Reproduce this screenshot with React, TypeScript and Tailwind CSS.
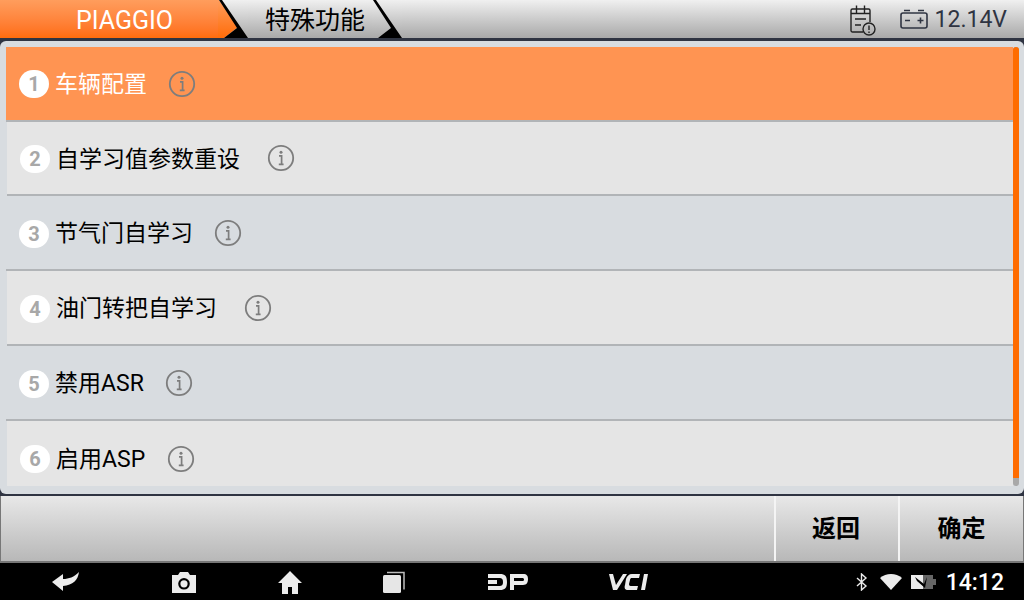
const FONT = { fontFamily: '"Roboto", "Noto Sans CJK SC", sans-serif' };

function Chevron({ fill, next }: { fill: string; next: string }) {
  return (
    <svg width="30" height="38" viewBox="0 0 30 38" className="shrink-0 block">
      <defs>
        <linearGradient id={fill} x1="0" y1="0" x2="0" y2="1">
          <stop offset="0" stopColor={fill === "o" ? "#ff9d5c" : "#f0f0f0"} />
          <stop offset="1" stopColor={fill === "o" ? "#ff6c0a" : "#a9a9a9"} />
        </linearGradient>
        <linearGradient id={next} x1="0" y1="0" x2="0" y2="1">
          <stop offset="0" stopColor="#f0f0f0" />
          <stop offset="1" stopColor="#a9a9a9" />
        </linearGradient>
      </defs>
      <rect width="30" height="38" fill={`url(#${next})`} />
      <polygon points="0,0 1,0 20,27 6,38 0,38" fill={`url(#${fill})`} />
      <polygon points="1,0 4,0 30,38 6,38 19,28" fill="#000" />
    </svg>
  );
}

function Info() {
  return (
    <svg width="28" height="28" viewBox="0 0 28 28" className="shrink-0 block">
      <circle cx="14" cy="14" r="12.2" fill="none" stroke="#7d7d7d" strokeWidth="1.8" />
      <circle cx="14" cy="8.300" r="1.500" fill="#7d7d7d" />
      <path d="M12 11.800h2.600v8.600M11.800 20.400h4.800" fill="none" stroke="#7d7d7d" strokeWidth="1.700" />
    </svg>
  );
}

const rows = [
  { n: 1, t: "车辆配置", gap: "ml-[21px]", badge: "", bg: "bg-[#ff9452] text-white h-[75px] pl-[13px]" },
  { n: 2, t: "自学习值参数重设", gap: "ml-[27px]", badge: "mt-[2px]", bg: "bg-[#e5e5e5] text-black h-[74px] ml-px pl-[13px]" },
  { n: 3, t: "节气门自学习", gap: "ml-[21px]", badge: "mt-[2px]", bg: "bg-[#d8dce0] text-black h-[75px] pl-[13px]" },
  { n: 4, t: "油门转把自学习", gap: "ml-[27px]", badge: "mt-[2px]", bg: "bg-[#e5e5e5] text-black h-[75px] ml-px pl-[13px]" },
  { n: 5, t: "禁用ASR", gap: "ml-[21px]", badge: "mt-[2px]", bg: "bg-[#d8dce0] text-black h-[75px] pl-[13px]" },
  { n: 6, t: "启用ASP", gap: "ml-[22px]", badge: "", bg: "bg-[#e5e5e5] text-black h-[75px] ml-px pl-[13px]" },
];

export default function App() {
  return (
    <div className="w-[1024px] h-[600px] overflow-hidden flex flex-col bg-[#2f3442]" style={FONT}>
      <header className="h-[38px] shrink-0 flex items-stretch bg-gradient-to-b from-[#f0f0f0] to-[#a9a9a9]">
        <div className="w-[218px] bg-gradient-to-b from-[#ff9d5c] to-[#ff6c0a] text-white text-[25px] leading-[41px] pl-[76px]">
          PIAGGIO
        </div>
        <Chevron fill="o" next="g1" />
        <div className="w-[124px] text-black text-[25px] leading-[41px] pl-[17px] whitespace-nowrap">特殊功能</div>
        <Chevron fill="g2" next="g3" />
        <div className="flex-1 flex items-center justify-end text-[#2f3442] text-[23px] pr-[17px]">
          <svg width="28" height="32" viewBox="0 0 28 32" className="mr-[23px] mt-[1px]" fill="none" stroke="#222" strokeWidth="1.400">
            <path d="M14 28H3.500a1.500 1.500 0 0 1-1.500-1.500V6.500A1.500 1.500 0 0 1 3.500 5h16A1.500 1.500 0 0 1 21 6.500V18" />
            <path d="M7.500 1.500v8M15.500 1.500v8M2 9.500h19M6 15h11M6 21h6" />
            <circle cx="20" cy="25" r="6" />
            <path d="M20 21.500v4.500M20 27.500v1.500" />
          </svg>
          <svg width="28" height="20" viewBox="0 0 28 20" className="mr-[7px]" fill="none" stroke="#2f3442" strokeWidth="1.600">
            <rect x="1" y="4" width="26" height="15" rx="2" />
            <path d="M4 1.500h6M18 1.500h6M5 11.500h5M17.500 11.500h6M20.500 8.500v6" />
          </svg>
          <span className="mt-[3px]">12.14V</span>
        </div>
      </header>

      <main className="h-[453px] mt-[3px] shrink-0 bg-[#d8dce0] rounded-[6px] pt-[6px] pl-[6px] pr-[5px] flex">
        <div className="flex-1 flex flex-col min-w-0 h-[439px] overflow-hidden">
          {rows.map((r) => (
            <div key={r.n} className={`flex items-center shrink-0 ${r.bg} ${r.n < 6 ? "border-b-2 border-[#b1b4b7]" : ""}`}>
              <span className={`w-[30px] h-[28px] rounded-full bg-white text-[#a8a8a8] font-bold text-[20px] flex items-center justify-center shrink-0 ${r.badge}`}>
                {r.n}
              </span>
              <span className="ml-[6px] mt-[4px] text-[23px] whitespace-nowrap">{r.t}</span>
              <span className={r.gap}>
                <Info />
              </span>
            </div>
          ))}
        </div>
        <div className="w-[6px] bg-[#a9a9a9] rounded-[3px] h-[439px] shrink-0 overflow-hidden">
          <div className="h-[431px] bg-[#ff6c00]" />
        </div>
      </main>

      <footer className="h-[67px] mt-[2px] shrink-0 flex justify-end bg-gradient-to-b from-[#e8e8e8] to-[#b8b8b8] border-x border-b-2 border-[#777]">
        <div className="w-[124px] border-l-2 border-[#f4f4f4] pr-[2px] flex items-center justify-center text-[24px] font-bold text-black">返回</div>
        <div className="w-[125px] border-l-2 border-[#f4f4f4] flex items-center justify-center text-[24px] font-bold text-black">确定</div>
      </footer>

      <nav className="flex-1 bg-black flex items-center text-[#ececec]">
        <div className="flex-1 flex items-center h-full">
          <svg width="30" height="24" viewBox="0 0 30 24" className="ml-[51px]" fill="#ececec">
            <path d="M1 12 12 4v5c6 0 11-2 16-7-1 8-6 13-16 14v5z" />
          </svg>
          <svg width="26" height="24" viewBox="0 0 26 24" className="ml-[90px]" fill="#ececec">
            <path fillRule="evenodd" d="M1 5h6l2-3h8l2 3h6v18H1zM13 8a5.800 5.800 0 1 0 0 11.600A5.800 5.800 0 0 0 13 8zm0 2.200a3.600 3.600 0 1 1 0 7.200 3.600 3.600 0 0 1 0-7.200z" />
          </svg>
          <svg width="26" height="26" viewBox="0 0 26 26" className="ml-[80px]" fill="#ececec">
            <path d="M13 2 1 14h4v11h6v-7h4v7h6V14h4z" />
          </svg>
          <svg width="24" height="24" viewBox="0 0 24 24" className="ml-[79px]">
            <path d="M5 2.500h17v17" fill="none" stroke="#bdbdbd" strokeWidth="1.500" />
            <rect x="1" y="5" width="18" height="18" rx="1.500" fill="#e6e6e6" />
          </svg>
          <svg width="42" height="18" viewBox="0 0 42 18" className="ml-[81px]" fill="#ececec">
            <path d="M1 1h12c5 0 7 2 7 8s-2 8-7 8H1v-4h11c3 0 4-1 4-4s-1-4-4-4H1zM1 7h9v4H1z" />
            <path d="M23 1h13c4 0 5 2 5 5s-1 6-5 6H27v5h-4zm4 4v3h8c1.500 0 2-.5 2-1.500S36.500 5 35 5z" />
          </svg>
          <svg width="46" height="18" viewBox="0 0 46 18" className="ml-[79px]" fill="#ececec">
            <path d="M1 1h4l3 11 7-11h4L9 17H5zM20 17c-3 0-4-2-3-5l1-6c1-3 3-5 6-5h8l-1 4h-7c-1 0-2 .5-2 2l-1 4c0 1 .5 2 1.500 2H30l-1 4zM36 1h4l-3 16h-4z" />
          </svg>
        </div>
        <div className="flex items-center pr-[20px] text-white">
          <svg width="12" height="18" viewBox="0 0 12 18" fill="none" stroke="#ececec" strokeWidth="1.400" className="mr-[12px]">
            <path d="M1 5l9 8-4.500 4V1L10 5 1 13" />
          </svg>
          <svg width="22" height="16" viewBox="0 0 22 16" fill="#ececec" className="mr-[9px]">
            <path d="M0 4C3 1.500 7 0 11 0s8 1.500 11 4L11 16z" />
          </svg>
          <svg width="26" height="16" viewBox="0 0 26 16" className="mr-[9px]">
            <rect x="0" y="1" width="12" height="14" fill="#ececec" />
            <rect x="12" y="1" width="10" height="14" fill="#666" />
            <rect x="22" y="5" width="3" height="6" fill="#666" />
            <path d="M4 3l9 7 3-7-2 11-8-7z" fill="#000" />
          </svg>
          <span className="text-[23px] font-medium mt-[3px]">14:12</span>
        </div>
      </nav>
    </div>
  );
}
